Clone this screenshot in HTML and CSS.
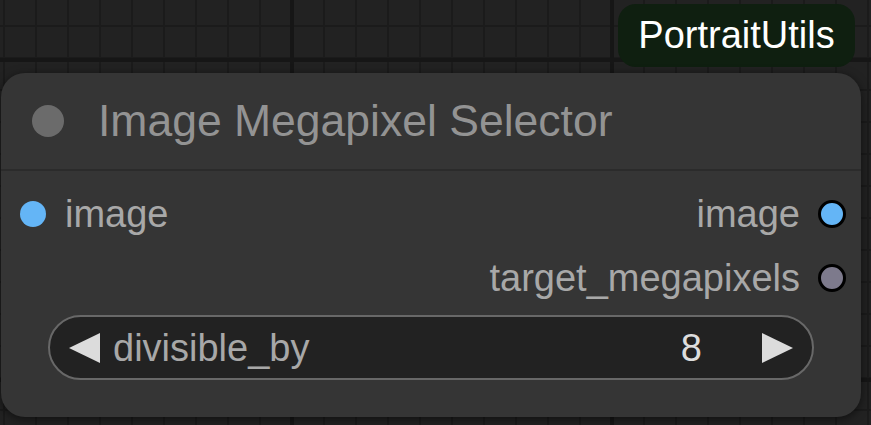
FILE: index.html
```html
<!DOCTYPE html>
<html>
<head>
<meta charset="utf-8">
<link rel="stylesheet" href="styles.css">
</head>
<body>
<div class="canvas">
  <div class="badge">PortraitUtils</div>
  <div class="node">
    <div class="title">
      <span class="title-dot"></span>
      <span class="title-text">Image Megapixel Selector</span>
    </div>
    <div class="body">
      <div class="row">
        <div class="slot-in"><span class="dot in"></span><span class="label">image</span></div>
        <div class="slot-out"><span class="label">image</span><span class="dot out blue"></span></div>
      </div>
      <div class="row">
        <div class="slot-in"></div>
        <div class="slot-out"><span class="label">target_megapixels</span><span class="dot out gray"></span></div>
      </div>
      <div class="widget">
        <span class="arrow">
          <svg width="31" height="30" viewBox="0 0 31 30"><polygon points="0,15 31,0 31,30" fill="#dcdcdc"/></svg>
        </span>
        <span class="w-name">divisible_by</span>
        <span class="w-value">8</span>
        <span class="arrow right">
          <svg width="31" height="30" viewBox="0 0 31 30"><polygon points="31,15 0,0 0,30" fill="#dcdcdc"/></svg>
        </span>
      </div>
    </div>
  </div>
</div>
</body>
</html>
```

FILE: styles.css
```css
html, body {
  margin: 0;
  padding: 0;
  width: 871px;
  height: 425px;
  overflow: hidden;
}

body {
  font-family: "Liberation Sans", Arial, sans-serif;
}

.canvas {
  position: relative;
  width: 871px;
  height: 425px;
  background-color: #222222;
  background-image:
    linear-gradient(to right, #161616 4px, transparent 4px),
    linear-gradient(to bottom, #161616 4px, transparent 4px),
    linear-gradient(to right, #1b1b1b 2px, transparent 2px),
    linear-gradient(to bottom, #1b1b1b 2px, transparent 2px);
  background-size: 320px 100%, 100% 320px, 32px 100%, 100% 32px;
  background-position: 290px 0, 0 58px, 3px 0, 0 25px;
}

.badge {
  position: absolute;
  left: 618px;
  top: 4px;
  width: 237px;
  height: 63px;
  border-radius: 18px;
  background: #0f1f10;
  color: #ffffff;
  font-size: 38px;
  display: flex;
  align-items: center;
  justify-content: center;
}

.node {
  position: absolute;
  left: 1px;
  top: 73px;
  width: 860px;
  height: 344px;
  border-radius: 24px;
  background: #353535;
  box-shadow: 0 2px 10px rgba(0, 0, 0, 0.55);
  display: flex;
  flex-direction: column;
}

.title {
  height: 96px;
  border-bottom: 2px solid #2b2b2b;
  display: flex;
  align-items: center;
  padding-left: 31px;
  box-sizing: content-box;
}

.title-dot {
  width: 32px;
  height: 32px;
  border-radius: 50%;
  background: #6b6b6b;
  flex: none;
}

.title-text {
  margin-left: 34px;
  font-size: 44.5px;
  color: #939393;
  line-height: 1;
}

.body {
  padding-top: 11px;
  display: flex;
  flex-direction: column;
}

.row {
  height: 64px;
  display: flex;
  align-items: center;
  justify-content: space-between;
}

.slot-in {
  display: flex;
  align-items: center;
  padding-left: 19px;
}

.slot-out {
  display: flex;
  align-items: center;
  padding-right: 15px;
}

.label {
  font-size: 38px;
  color: #a8a8a8;
  line-height: 1;
}

.dot {
  border-radius: 50%;
  flex: none;
}

.dot.in {
  width: 26px;
  height: 26px;
  background: #64b5f6;
  margin-right: 19px;
}

.dot.out {
  width: 22px;
  height: 22px;
  border: 3px solid #000;
  margin-left: 18px;
}

.dot.blue { background: #64b5f6; }
.dot.gray { background: #7d7a8c; }

.widget {
  margin: 5px 47px 0 47px;
  height: 65px;
  box-sizing: border-box;
  border: 2px solid #686868;
  border-radius: 33px;
  background: #222222;
  display: flex;
  align-items: center;
  padding: 0 19px 0 19px;
}

.arrow {
  display: flex;
  flex: none;
}

.arrow svg { display: block; }

.w-name {
  margin-left: 13px;
  font-size: 38px;
  color: #a8a8a8;
  flex: 1;
  line-height: 1;
}

.w-value {
  font-size: 38px;
  color: #dddddd;
  margin-right: 60px;
  line-height: 1;
}
```
